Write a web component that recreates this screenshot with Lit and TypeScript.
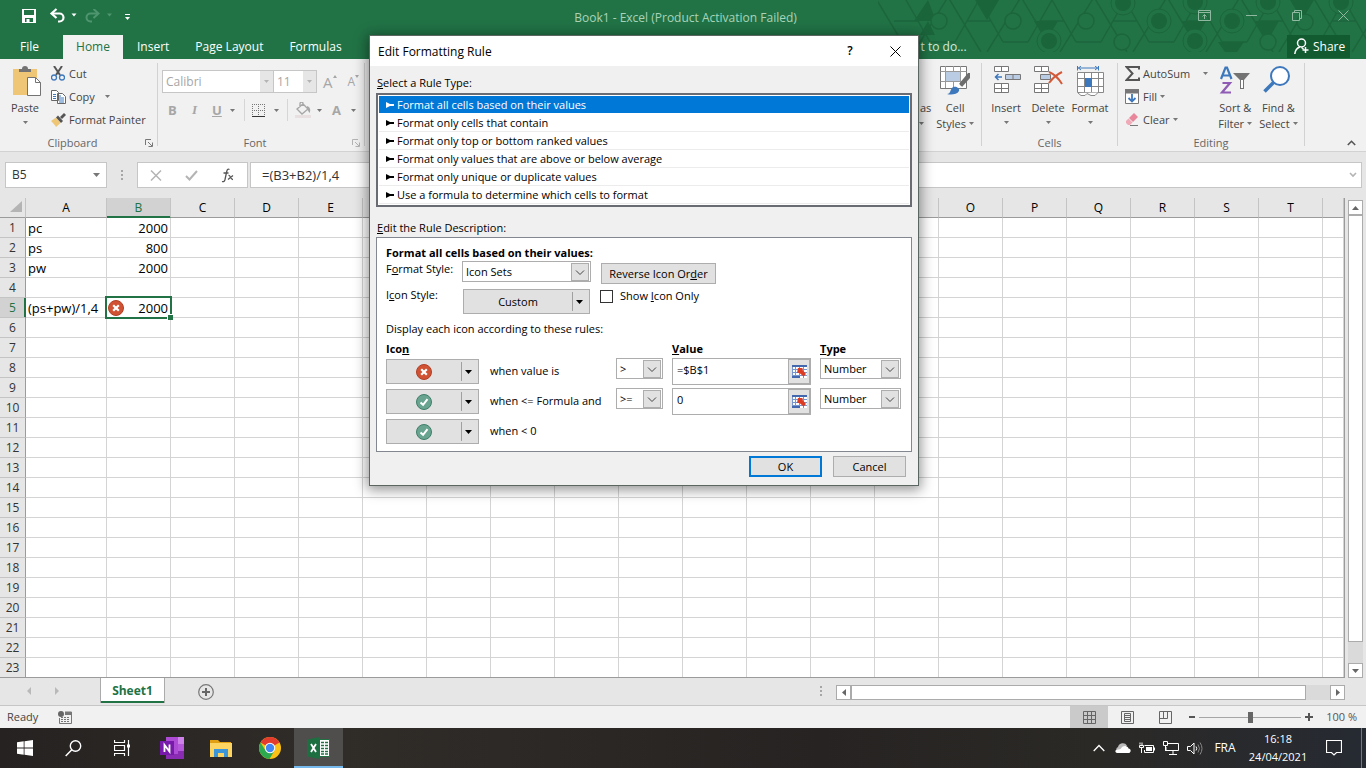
import { LitElement, html, svg, css } from "lit";
import { customElement, state } from "lit/decorators.js";
import { classMap } from "lit/directives/class-map.js";

const COLUMNS = ["A","B","C","D","E","F","G","H","I","J","K","L","M","N","O","P","Q","R","S","T"];
const ROWS = Array.from({ length: 23 }, (_, i) => i + 1);
const CELLS: Record<string, string> = {
  A1: "pc", B1: "2000", A2: "ps", B2: "800", A3: "pw", B3: "2000", A5: "(ps+pw)/1,4", B5: "2000",
};
const RULES = [
  "Format all cells based on their values",
  "Format only cells that contain",
  "Format only top or bottom ranked values",
  "Format only values that are above or below average",
  "Format only unique or duplicate values",
  "Use a formula to determine which cells to format",
];

const down = html`<svg class="down" width="5" height="3" viewBox="0 0 5 3"><path d="M0 0h5L2.5 3z" fill="currentColor"/></svg>`;
const caret = html`<svg class="caret" width="7" height="4" viewBox="0 0 7 4"><path d="M0 0h7L3.5 4z"/></svg>`;
const chevron = html`<svg class="chev" width="18" height="18" viewBox="0 0 18 18"><rect x=".5" y=".5" width="17" height="17" fill="#e1e1e1" stroke="#adadad"/><path d="M5 7.5l4 4 4-4" fill="none" stroke="#444"/></svg>`;
const crossBadge = html`<svg width="16" height="16" viewBox="0 0 16 16"><circle cx="8" cy="8" r="7.5" fill="#d05233" stroke="#b03f25"/><path d="M5.2 5.2l5.6 5.6M10.8 5.2l-5.6 5.6" stroke="#fff" stroke-width="2.2"/></svg>`;
const checkBadge = html`<svg width="16" height="16" viewBox="0 0 16 16"><circle cx="8" cy="8" r="7.5" fill="#68a490" stroke="#3f7f69"/><path d="M4.5 8.4l2.6 2.4 4.4-5.6" fill="none" stroke="#fff" stroke-width="2"/></svg>`;
const launcher = html`<svg class="launch" width="8" height="8" viewBox="0 0 8 8"><path d="M.5 6V.5H6M3 3l4 4M7.5 3.5v4h-4" fill="none" stroke="currentColor"/></svg>`;
const refIcon = html`<svg width="17" height="15" viewBox="0 0 17 15"><rect x="1" y="1" width="15" height="13" fill="#fff"/><path d="M1 1h15v2H1z" fill="#4468b0"/><path d="M1 5.5h15M1 8.5h15M1 11.5h15M4.5 3v11M8.5 3v11M12.5 3v11M1.5 3v11" stroke="#7796cf" fill="none"/><path d="M1 13h8" stroke="#4468b0" stroke-width="2"/><path d="M7 4h4.500v2l3.500 4-2.500 2.500-4-3.500H6z" fill="#dd3b22"/></svg>`;

/* Tiled hexagon ornament at the right of the title bar */
function ornament() {
  const lines = [];
  for (let x = 28; x < 520; x += 73) {
    lines.push(svg`<path d="M${x - 31} -3L${x + 2} 52M${x + 42} -3L${x + 8} 52M${x} 0L${x + 24} 42M${x + 49} 42L${x + 73} 0M${x + 24} 42h25M${x + 12} 21h-24"/>`);
  }
  const hollow = [[61, 21], [135, 21], [208, 21], [244, 42], [390, 42], [427, 22]];
  const solid = [[171, 41], [245, 3], [281, 21], [317, 41], [317, 2], [354, 21], [390, 2], [463, 2]];
  return html`<svg class="ornament" width="488" height="52" viewBox="0 0 488 52">
    <g fill="none" stroke="#1c663c" stroke-width="1.5">${lines}</g>
    <g fill="#1b653b">
      <path d="M36 21L50 0l8 21zM42 35l8-14 7 14zM97 0h24l-12 20zM156 21h24l-12 20zM267 0h24l-12-14zM304 21h24l-12 21zM412 0h24l-12 20zM377 21h24l-12 21zM340 42h26l-7 10h-12z"/>
    </g>
    <g fill="#217346" stroke="#1c663c" stroke-width="1.5">${hollow.map(([x, y]) => svg`<circle cx=${x} cy=${y} r="8"/>`)}</g>
    <g fill="#1b653b">${solid.map(([x, y]) => svg`<circle cx=${x} cy=${y} r="12" fill="#217346" stroke="#1c663c"/><circle cx=${x} cy=${y} r="8"/>`)}</g>
  </svg>`;
}

@customElement("format-dialog")
class FormatDialog extends LitElement {
  @state() selected = 0;

  static styles = css`
    :host { display: block; box-sizing: border-box; width: 550px; border: 1px solid #5c6660; background: #f0f0f0;
      font: 11px/16px "Open Sans", "Noto Sans", sans-serif; color: #000; box-shadow: 0 2px 12px 2px rgba(0,0,0,.42); }
    * { box-sizing: border-box; }
    button, select, input { font: inherit; color: inherit; margin: 0; border-radius: 0; }
    header { display: flex; gap: 25px; height: 30px; background: #fff; align-items: center; padding: 0 13px 0 8px; font-size: 12px; }
    h1 { font: inherit; margin: 0; flex: 1; padding-top: 1px; }
    header button { border: 0; background: none; padding: 0; width: 20px; height: 20px; display: grid; place-items: center; font-weight: 600; }
    .body { padding: 9px 6px 8px; }
    .label { display: block; padding-left: 1px; }
    .rules { margin: 2px 0 13px; padding: 1px; border: 2px solid #696c72; background: #fff; list-style: none; }
    .rules li { height: 18px; line-height: 18px; border-bottom: 1px solid #ececec; display: flex; align-items: center; gap: 3px; padding-left: 7px; cursor: default; }
    .rules li.on { background: #0078d7; color: #fff; border-color: #fff; }
    .desc { margin-top: 1px; border: 1px solid #828790; background: #fff; height: 215px; padding: 7px 9px 0; }
    h2 { font: inherit; font-weight: 700; margin: 0; line-height: 16px; }
    .form { display: grid; grid-template-columns: 76px 129px 1fr; align-items: start; }
    .form > :nth-child(3n) { margin-left: 10px; }
    .btn { border: 1px solid #adadad; background: #e1e1e1; height: 21px; padding: 0 8px; line-height: 19px; }
    .reverse { justify-self: start; width: 115px; margin-top: 2px; padding: 0; }
    .combo { display: grid; border: 1px solid #adadad; background: #fff; height: 21px; padding: 1px; }
    .combo select { grid-area: 1 / 1; appearance: none; border: 0; background: none; padding: 0 0 0 2px; width: 100%; line-height: 16px; outline: 0; }
    .chev { grid-area: 1 / 1; justify-self: end; align-self: center; pointer-events: none; }
    .split { display: flex; align-items: center; justify-content: center; height: 25px; border: 1px solid #adadad; background: #e1e1e1; padding: 0; }
    .split .main { flex: 1; display: grid; place-items: center; }
    .split .drop { width: 17px; height: 19px; border-left: 1px solid #a0a0a0; display: grid; place-items: center; padding-right: 4px; }
    .icons { margin: 5px 1px 0; }
    .second { margin-top: 3px; }
    .check { display: flex; align-items: center; gap: 7px; margin-top: 4px; }
    .check input { appearance: none; width: 13px; height: 13px; border: 1px solid #333; background: #fff; margin-left: -1px; }
    .note { margin: 7px 0 0; }
    .grid { display: grid; grid-template-columns: 93px 11px 126px 47px 9px 139px 9px 81px; grid-template-rows: 17px; grid-auto-rows: 30px; align-items: start; margin-top: 4px; }
    .c1 { grid-column: 1; } .c3 { grid-column: 3; } .c4 { grid-column: 4; } .c6 { grid-column: 6; } .c8 { grid-column: 8; }
    .grid .split { margin-top: 1px; }
    .grid .c3 { margin-top: 5px; }
    .grid b { line-height: 16px; }
    .ref { display: flex; height: 27px; border: 1px solid #adadad; background: #fff; }
    .ref input { flex: 1; min-width: 0; border: 0; background: none; padding: 0 4px 4px; outline: 0; }
    .ref button { width: 22px; border: 1px solid #adadad; background: #e1e1e1; padding: 0; display: grid; place-items: center; }
    footer { display: flex; justify-content: flex-end; gap: 11px; padding: 4px 6px 0 0; }
    footer .btn { width: 73px; }
    footer .ok { border: 2px solid #0078d7; line-height: 17px; }
  `;

  private combo(cls: string, name: string, value: string) {
    return html`<div class="combo ${cls}"><select aria-label=${name}><option>${value}</option></select>${chevron}</div>`;
  }

  private iconButton(badge: unknown, name: string) {
    return html`<button class="split c1" aria-label=${name}><span class="main">${badge}</span><span class="drop">${caret}</span></button>`;
  }

  render() {
    return html`
      <header>
        <h1>Edit Formatting Rule</h1>
        <button aria-label="Help">?</button>
        <button aria-label="Close"><svg width="11" height="11" viewBox="0 0 11 11"><path d="M.5.5l10 10M10.5.5l-10 10" stroke="#000"/></svg></button>
      </header>
      <div class="body">
        <span class="label"><u>S</u>elect a Rule Type:</span>
        <ul class="rules" role="listbox" aria-label="Select a Rule Type">
          ${RULES.map((rule, i) => html`<li role="option" aria-selected=${i === this.selected} class=${classMap({ on: i === this.selected })} @click=${() => (this.selected = i)}>
            <svg width="8" height="6" viewBox="0 0 8 6"><path d="M0 0l4 2h4v2H4L0 6z" fill="currentColor"/></svg>${rule}</li>`)}
        </ul>
        <span class="label"><u>E</u>dit the Rule Description:</span>
        <section class="desc">
          <h2>Format all cells based on their values:</h2>
          <div class="form">
            <label for="style">F<u>o</u>rmat Style:</label>
            <div class="combo"><select id="style"><option>Icon Sets</option></select>${chevron}</div>
            <button class="btn reverse">Reverse Icon Or<u>d</u>er</button>
            <label class="second" for="icons">I<u>c</u>on Style:</label>
            <button class="split icons" id="icons"><span class="main">Custom</span><span class="drop">${caret}</span></button>
            <label class="check"><input type="checkbox"><span>Show <u>I</u>con Only</span></label>
          </div>
          <p class="note">Display each icon according to these rules:</p>
          <div class="grid">
            <b class="c1">Ico<u>n</u></b><b class="c6"><u>V</u>alue</b><b class="c8"><u>T</u>ype</b>
            ${this.iconButton(crossBadge, "First icon")}
            <span class="c3">when value is</span>
            ${this.combo("c4", "First operator", ">")}
            <div class="ref c6"><input aria-label="First value" value="=$B$1"><button aria-label="Pick cell">${refIcon}</button></div>
            ${this.combo("c8", "First type", "Number")}
            ${this.iconButton(checkBadge, "Second icon")}
            <span class="c3">when &lt;= Formula and</span>
            ${this.combo("c4", "Second operator", ">=")}
            <div class="ref c6"><input aria-label="Second value" value="0"><button aria-label="Pick cell">${refIcon}</button></div>
            ${this.combo("c8", "Second type", "Number")}
            ${this.iconButton(checkBadge, "Third icon")}
            <span class="c3">when &lt; 0</span>
          </div>
        </section>
        <footer><button class="btn ok">OK</button><button class="btn">Cancel</button></footer>
      </div>`;
  }
}

@customElement("app-root")
class AppRoot extends LitElement {
  static styles = css`
    :host { display: flex; flex-direction: column; height: 100vh; position: relative; overflow: hidden; background: #e6e6e6;
      font: 11px/16px "Open Sans", "Noto Sans", sans-serif; color: #444; }
    * { box-sizing: border-box; }
    svg { display: block; flex: none; }
    button, input, select { font: inherit; color: inherit; margin: 0; border-radius: 0; }
    button { border: 0; background: none; padding: 0; white-space: nowrap; }
    format-dialog { position: absolute; left: 369px; top: 35px; z-index: 5; }

    .top { background: #217346; position: relative; color: #fff; flex: none; }
    .ornament { position: absolute; right: 0; top: 0; }
    .title { height: 35px; display: flex; align-items: center; position: relative; padding: 0 17px 4px 22px; }
    .quick { display: flex; align-items: center; flex: 1; }
    .quick button, .win button { display: grid; place-items: center; }
    .quick .redo { color: #4f9570; }
    .title h1 { font: inherit; font-size: 12px; margin: 0; padding-top: 5px; color: #a9d3b9; }
    .win { flex: 1; display: flex; justify-content: flex-end; gap: 35px; color: #8fb9a0; }
    .tabs { display: flex; height: 24px; position: relative; font-size: 12px; line-height: 24px; padding-right: 16px; }
    .tabs a { color: #fff; text-decoration: none; padding: 0 13px; }
    .tabs .file { width: 63px; padding: 0 0 0 20px; }
    .tabs .on { background: #f1f1f1; color: #217346; width: 60px; padding: 0; text-align: center; margin-right: 1px; }
    .tell { flex: 1; color: #d6ebde; white-space: nowrap; }
    .tell span { display: block; width: 612px; text-align: right; }
    .share { background: #125b31; width: 63px; height: 23px; display: flex; align-items: center; gap: 4px; padding-left: 7px; }

    .ribbon { flex: none; display: flex; height: 93px; background: #f1f1f1; border-bottom: 1px solid #d2d2d2; padding-top: 4px; }
    .group { display: grid; grid-template-rows: 1fr 16px; padding-right: 1px; background: linear-gradient(#d2d2d2, #d2d2d2) right top / 1px calc(100% - 5px) no-repeat; }
    .body { display: flex; min-height: 0; }
    .name { text-align: center; color: #666; display: flex; justify-content: center; }
    .name .launch { margin: 4px 4px 0 0; color: #777; }
    .font .launch { color: #b4b4b4; }
    .name span { flex: 1; }
    .down { color: #777; }
    .clip { width: 158px; } .font { width: 207px; } .rest { flex: 1; min-width: 0; } .cells { width: 136px; } .edit { width: 187px; }
    .big { display: flex; flex-direction: column; align-items: center; line-height: 16px; padding-top: 3px; }
    .big .down { margin-top: 5px; }
    .big svg:first-child { margin-bottom: 4px; }
    .line { display: flex; align-items: center; justify-content: center; gap: 3px; }
    .big .line .down { margin-top: 2px; }
    .stack { display: grid; grid-auto-rows: 23px; align-content: start; margin-top: -1px; }
    .stack button { display: flex; align-items: center; gap: 3px; }
    .stack .pic { width: 16px; display: grid; place-items: center; }
    .stack .down { margin-left: 7px; }
    .stack .near { margin-left: 0; }
    .fontbody { padding: 7px 0 0 4px; flex-direction: column; gap: 6px; color: #a6a6a6; }
    .frow { display: flex; align-items: center; height: 23px; }
    .pick { display: grid; border: 1px solid #c6c6c6; background: #fff; height: 23px; margin-right: -1px; }
    .pick select { grid-area: 1/1; appearance: none; border: 0; background: none; padding: 0 3px; width: 100%; font-size: 12px; }
    .pick i { grid-area: 1/1; justify-self: end; width: 13px; background: #e6e6e6; display: grid; place-items: center; pointer-events: none; }
    .pick .down { color: #b4b4b4; }
    .wide { width: 112px; } .narrow { width: 44px; }
    .grow { display: flex; font-size: 15px; padding-left: 7px; }
    .grow svg { margin-top: 1px; }
    .grow.small { font-size: 12px; padding-left: 11px; }
    .tools { display: grid; grid-template-columns: 22px 22px 18px 14px 8px 22px 13px 8px 22px 15px 19px 6px; align-items: center; font-size: 13px; font-weight: 700; padding-left: 6px; }
    .tools i { font-weight: 600; padding-left: 2px; font-family: "Liberation Serif", serif; }
    .rule { width: 1px; height: 22px; background: #d6d6d6; }
    .styles { padding-right: 7px; justify-content: flex-end; gap: 5px; }
    .edit .body { gap: 6px; }
    .edit .stack { margin-left: 6px; margin-right: 3px; }
    .edit .wider .down { margin-left: 10px; }
    .end { width: 61px; display: flex; align-items: flex-end; justify-content: flex-end; padding: 0 10px 5px; }

    .formula { flex: none; display: flex; height: 46px; padding: 10px 4px 10px 5px; color: #333; font-size: 12px; }
    .box { border: 1px solid #c6c6c6; background: #fff; display: flex; align-items: center; }
    .box input { border: 0; background: none; outline: 0; min-width: 0; padding: 0; }
    .namebox { width: 102px; padding: 0 6px; }
    .namebox input { width: 82px; }
    .dots { width: 30px; display: grid; place-items: center; }
    .fx { width: 111px; justify-content: space-between; padding: 0 12px 0 12px; margin-right: 2px; }
    .entry { flex: 1; padding: 0 4px 0 11px; }
    .entry input { flex: 1; font-size: 13px; }

    .sheet { flex: 1; min-height: 0; display: flex; }
    .view { flex: 1; min-width: 0; overflow: hidden; border-bottom: 1px solid #9b9b9b; border-right: 1px solid #9b9b9b; }
    table { table-layout: fixed; width: 100%; border-collapse: separate; border-spacing: 0; background: #fff; color: #000; font-size: 13px; line-height: 17px; }
    th { font-weight: 400; background: #e6e6e6; padding: 0; height: 20px; border-right: 1px solid #c4c4c4; border-bottom: 1px solid #9b9b9b; font-size: 12px; line-height: 19px; }
    td { padding: 2px 2px 0; height: 20px; border-right: 1px solid #d4d4d4; border-bottom: 1px solid #d4d4d4; white-space: nowrap; overflow: hidden; }
    tbody th { border-right-color: #9b9b9b; border-bottom-color: #c4c4c4; color: #333; }
    th.on { background: #d2d2d2; color: #217346; }
    thead th.on { box-shadow: inset 0 -1px #217346; border-bottom-color: #217346; }
    tbody th.on { border-right-color: #217346; box-shadow: inset -1px 0 #217346; }
    .num { text-align: right; }
    .active { position: relative; overflow: visible; }
    .active svg { position: absolute; left: 1px; top: 2px; }
    .active::before { content: ""; position: absolute; inset: -2px; border: 2px solid #217346; }
    .active::after { content: ""; position: absolute; right: -3px; bottom: -3px; width: 5px; height: 5px; background: #217346; border: solid #fff; border-width: 1px 0 0 1px; }
    .corner svg { margin: 0 3px 2px auto; }
    .rh { width: 26px; } .ca { width: 81px; } .cn { width: 64px; }
    .vbar { width: 15px; margin: 2px 3px 0 3px; display: flex; flex-direction: column; background: #dadada; }
    .vbar button, .hbar button { width: 15px; height: 15px; background: #fff; border: 1px solid #ababab; display: grid; place-items: center; color: #666; flex: none; }
    .thumb { background: #fff; border: 1px solid #ababab; }
    .vbar .thumb { flex: 428; } .vbar .gap { flex: 21; }

    .sheets { flex: none; display: flex; height: 28px; border-bottom: 1px solid #c6c6c6; padding-right: 21px; }
    .nav { width: 100px; display: flex; gap: 24px; padding: 9px 0 0 27px; }
    .tab { width: 65px; height: 25px; background: #fff; border: 0 solid #ababab; border-width: 0 1px; box-shadow: inset 0 -2px #217346; color: #217346; font-size: 12px; font-weight: 700; }
    .add { margin-left: 33px; height: 28px; }
    .split { flex: 1; display: flex; justify-content: flex-end; padding: 8px 14px 0; }
    .hbar { width: 509px; max-width: 60%; display: flex; margin-top: 7px; height: 15px; background: #dadada; }
    .hbar .thumb { flex: 456; } .hbar .gap { flex: 24; }

    .status { flex: none; display: flex; height: 22px; background: #f1f1f1; align-items: center; padding: 0 9px 0 7px; }
    .status .info { flex: 1; display: flex; gap: 20px; align-items: center; }
    .status .mode { width: 38px; height: 22px; display: grid; place-items: center; color: #666; }
    .status .mode.on { background: #cacaca; }
    .zoom { display: flex; align-items: center; gap: 4px; padding-left: 5px; color: #555; }
    .zoom input { appearance: none; width: 102px; height: 12px; background: linear-gradient(#a6a6a6, #a6a6a6) center / 100% 1px no-repeat; }
    .zoom input::-webkit-slider-thumb { appearance: none; width: 5px; height: 11px; background: #666; }
    .pct { width: 40px; text-align: right; }

    .taskbar { flex: none; height: 40px; display: flex; color: #fff; background: linear-gradient(90deg, #262221, #302c28 25%, #262322 60%, #2b2926 80%, #262a32); }
    .taskbar button { width: 49px; height: 40px; display: grid; place-items: center; }
    .taskbar .on { background: #504e4c; box-shadow: inset 0 -2px #76b9ed; }
    .tray { flex: 1; display: flex; justify-content: flex-end; align-items: center; }
    .tray button { width: 24px; }
    .tray .lang { width: 36px; font-size: 12px; }
    .clock { width: 70px; text-align: center; line-height: 18px; }
    .tray .bell { width: 42px; }
    .desk { width: 5px; height: 40px; border-left: 1px solid #77777b; margin-left: 6px; }
  `;

  private cell(col: string, row: number) {
    const key = col + row;
    const active = key === "B5";
    return html`<td class=${classMap({ num: col === "B", active })}>${active ? crossBadge : ""}${CELLS[key] ?? ""}</td>`;
  }

  private renderTop() {
    return html`<header class="top">${ornament()}
      <div class="title">
        <div class="quick">
          <button aria-label="Save"><svg width="14" height="14" viewBox="0 0 14 14"><path fill-rule="evenodd" d="M0 0h14v14H0zM2 1v5h10V1zM3 9v4h1.5v-3h3v3H11V9z" fill="#fff"/></svg></button>
          <button aria-label="Undo"><svg width="30" height="14" viewBox="0 0 30 14" overflow="visible"><g transform="translate(14 0)"><path d="M3 4.5h6.5a4 4 0 0 1 0 8H8" fill="none" stroke="#fff" stroke-width="2.2"/><path d="M6.5 0L1.5 4.5l5 4.5" fill="none" stroke="#fff" stroke-width="2.2"/><path d="M21.5 4.5h5l-2.500 3z" fill="#fff"/></g></svg></button>
          <button class="redo" aria-label="Redo"><svg width="48" height="14" viewBox="0 0 48 14"><g transform="translate(18 0)"><path d="M13 4.5H6.5a4 4 0 0 0 0 8H8" fill="none" stroke="currentColor" stroke-width="2"/><path d="M9.5 0l5 4.5-5 4.5" fill="none" stroke="currentColor" stroke-width="2"/><path d="M23 4.5h5l-2.500 3z" fill="currentColor"/></g></svg></button>
          <button aria-label="Customize"><svg width="16" height="10" viewBox="0 0 16 10"><path d="M11 3.5h5" stroke="#fff"/><path d="M11 6h5l-2.500 3z" fill="#fff"/></svg></button>
        </div>
        <h1>Book1 - Excel (Product Activation Failed)</h1>
        <div class="win">
          <button aria-label="Ribbon options"><svg width="13" height="11" viewBox="0 0 13 11"><path d="M.5.5h12v10H.5zM.5 2.5h12M6.5 9V4.5M4.5 6.5l2-2 2 2" fill="none" stroke="currentColor"/></svg></button>
          <button aria-label="Minimize"><svg width="11" height="11" viewBox="0 0 11 11"><path d="M0 5.5h11" stroke="currentColor"/></svg></button>
          <button aria-label="Restore"><svg width="11" height="11" viewBox="0 0 11 11"><path d="M.5 2.5h7v8h-7zM2.5 2.5v-2h7v8h-2" fill="none" stroke="currentColor"/></svg></button>
          <button aria-label="Close"><svg width="11" height="11" viewBox="0 0 11 11"><path d="M.5.5l10 10M10.5.5l-10 10" stroke="currentColor"/></svg></button>
        </div>
      </div>
      <nav class="tabs">
        <a class="file" href="#">File</a><a class="on" href="#">Home</a><a href="#">Insert</a><a href="#">Page Layout</a><a href="#">Formulas</a>
        <div class="tell"><span>t to do...</span></div>
        <button class="share"><svg width="15" height="17" viewBox="0 0 15 17"><circle cx="7.5" cy="5" r="4" fill="none" stroke="#fff" stroke-width="1.5"/><path d="M.8 16c.4-3.5 2.2-6 5-7M7.5 9.5l2 1.5M11.5 9v6M8.5 12h6" fill="none" stroke="#fff" stroke-width="1.5"/></svg>Share</button>
      </nav>
    </header>`;
  }

  private renderRibbon() {
    return html`<section class="ribbon">
      <div class="group clip"><div class="body">
        <button class="big">
          <svg width="50" height="30" viewBox="0 0 50 30"><path d="M13 3h24v26H13z" fill="#eec675"/><path d="M19 6V3h3a3 3 0 0 1 6 0h3v3z" fill="#737373"/><path d="M27.5 11.5h8l5 5v13h-13z" fill="#fff" stroke="#737373"/><path d="M35.5 11.5v5h5" fill="none" stroke="#737373"/></svg>
          <span>Paste</span>${down}
        </button>
        <div class="stack">
          <button><span class="pic"><svg width="14" height="15" viewBox="0 0 14 15"><path d="M3 0l6 9M11 0L5 9" stroke="#555" stroke-width="2"/><circle cx="3" cy="11.5" r="2.5" fill="none" stroke="#3d78bd" stroke-width="1.3"/><circle cx="11" cy="11.5" r="2.5" fill="none" stroke="#3d78bd" stroke-width="1.3"/></svg></span>Cut</button>
          <button><span class="pic"><svg width="15" height="14" viewBox="0 0 15 14"><path d="M.5.5h5l2 2v8h-7zM6.5 3.5h5l3 3v7h-8z" fill="#fff" stroke="#666"/><path d="M2 4.5h3M2 6.5h3M2 8.5h3M8 8h5M8 10h5M8 12h5M8 6h2" stroke="#3d78bd"/></svg></span>Copy ${down}</button>
          <button><span class="pic"><svg width="16" height="14" viewBox="0 0 16 14"><path d="M1 8l5-3.5L10.5 10 6 14c-1-2-3-4-5-6z" fill="#eec675"/><path d="M6 4.5l2-2 5 5.5-2 2zM10 4l4-4 2 2-4 4z" fill="#555"/></svg></span>Format Painter</button>
        </div></div>
        <div class="name"><span>Clipboard</span>${launcher}</div>
      </div>
      <div class="group font"><div class="body fontbody">
        <div class="frow">
          <div class="pick wide"><select aria-label="Font"><option>Calibri</option></select><i>${down}</i></div>
          <div class="pick narrow"><select aria-label="Font size"><option>11</option></select><i>${down}</i></div>
          <button class="grow" aria-label="Increase font size">A<svg width="4" height="3" viewBox="0 0 4 3"><path d="M0 3h4L2 0z" fill="#a6a6a6"/></svg></button>
          <button class="grow small" aria-label="Decrease font size">A<svg width="4" height="3" viewBox="0 0 4 3"><path d="M0 0h4L2 3z" fill="#a6a6a6"/></svg></button>
        </div>
        <div class="tools">
          <span>B</span><i>I</i><u>U</u><span>${down}</span><span class="rule"></span>
          <svg width="13" height="13" viewBox="0 0 13 13"><path d="M.5 0v12M6.5 0v12M12.5 0v12M0 .5h13M0 6.5h13" stroke="#777" stroke-dasharray="1 1"/><path d="M0 12.5h13" stroke="#333"/></svg>
          ${down}<span class="rule"></span>
          <svg width="16" height="16" viewBox="0 0 16 16"><path d="M2 7l6-5 5 5-6 5zM5 5V1.5a1.5 1.5 0 0 1 3 0V4" fill="none" stroke="#a6a6a6" stroke-width="1.3"/><path d="M12 4c3 1 4 4 2.5 7L12 7z" fill="#a6a6a6"/><path d="M0 13h16v3H0z" fill="#e8e0e0"/></svg>
          ${down}<span>A</span>${down}
        </div></div>
        <div class="name"><span>Font</span>${launcher}</div>
      </div>
      <div class="group rest"><div class="body styles">
        <button class="big"><svg width="30" height="30" viewBox="0 0 30 30"><path d="M.5.5h26v22H.5zM.5 6.5h26M.5 12.5h26M9.5 0v22" fill="#fff" stroke="#777"/><path d="M18 20L28 8v6l-7 9z" fill="#777"/></svg><span>Format as</span><span class="line">Table ${down}</span></button>
        <button class="big"><svg width="30" height="30" viewBox="0 0 30 30"><path d="M.5.5h26v22H.5z" fill="#fff" stroke="#777"/><path d="M.5 5.5h26M.5 15.5h26M5.5 0v22M20.5 0v22M13.5 0v5M13.5 16v6" stroke="#999" fill="none"/><path d="M6 6h14v9H6z" fill="#b9cce4"/><path d="M19 18l9-11h2v5l-8 9z" fill="#6d6d6d"/><path d="M7 28c4 0 3-5 6-7 3-1 7 1 6 4-2 4-9 4-12 3z" fill="#3d78bd"/><path d="M18 18.5l3 3" stroke="#fff" stroke-width="2"/></svg><span>Cell</span><span class="line">Styles ${down}</span></button>
      </div><div class="name"></div></div>
      <div class="group cells"><div class="body">
        <button class="big"><svg width="48" height="30" viewBox="0 0 48 30"><path d="M12.5.5h14v5h-14zM19.5.5v5M12.5 17.5h14v9h-14zM12.5 22.5h14M19.5 17.5v9" fill="#fff" stroke="#777"/><path d="M23.5 8.5h15v5h-15zM31 8.5v5" fill="#b9cce4" stroke="#777"/><path d="M20 11h-6M16.5 8L13.5 11l3 3" fill="none" stroke="#3d78bd" stroke-width="1.5"/></svg><span>Insert</span>${down}</button>
        <button class="big"><svg width="36" height="30" viewBox="0 0 36 30"><path d="M4.5.5h14v5h-14zM11.5.5v5M4.5 17.5h14v9h-14zM4.5 22.5h14M11.5 17.5v9" fill="#fff" stroke="#777"/><path d="M10.5 8.5h10v5h-10z" fill="#b9cce4" stroke="#777"/><path d="M19 6c5 2 10 7 13 12M32 6c-6 3-10 7-13 11" fill="none" stroke="#d25a38" stroke-width="2"/></svg><span>Delete</span>${down}</button>
        <button class="big"><svg width="48" height="30" viewBox="0 0 48 30"><path d="M11.5 6.5h26v20h-26zM11.5 12.5h26M11.5 20.5h26M18.5 6v20M25.5 6v20M32.5 6v20" fill="#fff" stroke="#888"/><path d="M19 12h7v9h-7z" fill="#3d78bd"/><path d="M12 2h20M11.5 0v4.500M32.500 0v4.500M15 0l-2.500 2L15 4M29 0l2.500 2L29 4" fill="none" stroke="#3d78bd"/><path d="M12 27l3 2.500h4l2-2 4 2h4l3-3" fill="#fff" stroke="#888"/></svg><span>Format</span>${down}</button>
      </div><div class="name">Cells</div></div>
      <div class="group edit"><div class="body">
        <div class="stack">
          <button class="wider"><span class="pic"><svg width="15" height="15" viewBox="0 0 15 15"><path d="M14 3.5V1H1.5l6 6.5-6 6.5H14v-2.5" fill="none" stroke="#555" stroke-width="2"/></svg></span>AutoSum ${down}</button>
          <button><span class="pic"><svg width="14" height="15" viewBox="0 0 14 15"><path d="M.5 4h13v10.5H.5z" fill="#fff" stroke="#777"/><path d="M0 0h14v4H0z" fill="#777"/><path d="M7 5v7M3.5 9L7 12.5 10.5 9" fill="none" stroke="#3d78bd" stroke-width="1.8"/></svg></span>Fill <svg class="down near" width="5" height="3" viewBox="0 0 5 3"><path d="M0 0h5L2.5 3z" fill="currentColor"/></svg></button>
          <button><span class="pic"><svg width="14" height="13" viewBox="0 0 14 13"><path d="M4 5l5-5 4 4-5 5z" fill="#e8879b"/><path d="M3.5 5.5l4 4-2.5 2.500H3L1 10V8z" fill="#f0a9b7"/><path d="M5 12.5h8" stroke="#777"/></svg></span>Clear <svg class="down near" width="5" height="3" viewBox="0 0 5 3"><path d="M0 0h5L2.5 3z" fill="currentColor"/></svg></button>
        </div>
        <button class="big"><svg width="36" height="30" viewBox="0 0 36 30"><path d="M4 13L8.500 1.500h1.500L14.500 13M5.500 9.500h7.500" fill="none" stroke="#3d78bd" stroke-width="2.2"/><path d="M5.500 17H13L5 26.500h9" fill="none" stroke="#8e5bb5" stroke-width="2.2"/><path d="M16 7h17l-6 7v9h-4v-9z" fill="#737373"/><path d="M24 14h2v8h-2z" fill="#fff"/></svg><span>Sort &amp;</span><span class="line">Filter ${down}</span></button>
        <button class="big"><svg width="38" height="30" viewBox="0 0 38 30"><circle cx="21" cy="10" r="9" fill="#fff" stroke="#3d78bd" stroke-width="2"/><path d="M14.500 16.500L5.500 25.500" stroke="#3d78bd" stroke-width="3.5"/></svg><span>Find &amp;</span><span class="line">Select ${down}</span></button>
      </div><div class="name">Editing</div></div>
      <div class="end"><button aria-label="Collapse ribbon"><svg width="9" height="6" viewBox="0 0 9 6"><path d="M.8 5L4.5 1.3 8.2 5" fill="none" stroke="#555" stroke-width="1.6"/></svg></button></div>
    </section>`;
  }

  private renderSheet() {
    return html`
      <section class="formula">
        <div class="box namebox"><input aria-label="Name box" value="B5"><svg width="7" height="4" viewBox="0 0 7 4"><path d="M0 0h7L3.5 4z" fill="#777"/></svg></div>
        <div class="dots"><svg width="2" height="10" viewBox="0 0 2 10"><path d="M0 0h2v2H0zM0 4h2v2H0zM0 8h2v2H0z" fill="#a6a6a6"/></svg></div>
        <div class="box fx">
          <svg width="12" height="11" viewBox="0 0 12 11"><path d="M1 .5l10 10M11 .5L1 10.5" stroke="#b4b4b4" stroke-width="1.5"/></svg>
          <svg width="13" height="11" viewBox="0 0 13 11"><path d="M1 6l3.5 3.5L12 1" fill="none" stroke="#b4b4b4" stroke-width="2"/></svg>
          <svg width="14" height="15" viewBox="0 0 14 15"><path d="M8.5 1.5c-2-1-2.5.5-3 3L4 11.5c-.5 2-1.5 2.5-3 2M2.5 5h5M7.5 7.5c2-.5 2 4 4.5 4M12 7.5l-5 4" fill="none" stroke="#555" stroke-width="1.3"/></svg>
        </div>
        <div class="box entry"><input aria-label="Formula" value="=(B3+B2)/1,4"><svg width="8" height="6" viewBox="0 0 8 6"><path d="M1 1l3 3 3-3" fill="none" stroke="#b4b4b4" stroke-width="1.6"/></svg></div>
      </section>
      <main class="sheet">
        <div class="view"><table>
          <colgroup><col class="rh"><col class="ca">${COLUMNS.slice(1).map(() => html`<col class="cn">`)}<col></colgroup>
          <thead><tr><th class="corner"><svg width="12" height="11" viewBox="0 0 12 11"><path d="M12 0v11H0z" fill="#b4b4b4"/></svg></th>
            ${COLUMNS.map((c) => html`<th class=${classMap({ on: c === "B" })}>${c}</th>`)}<th></th></tr></thead>
          <tbody>${ROWS.map((r) => html`<tr><th class=${classMap({ on: r === 5 })}>${r}</th>${COLUMNS.map((c) => this.cell(c, r))}<td></td></tr>`)}</tbody>
        </table></div>
        <div class="vbar">
          <button aria-label="Scroll up"><svg width="7" height="4" viewBox="0 0 7 4"><path d="M0 4h7L3.5 0z" fill="currentColor"/></svg></button>
          <div class="thumb"></div><div class="gap"></div>
          <button aria-label="Scroll down"><svg width="7" height="4" viewBox="0 0 7 4"><path d="M0 0h7L3.5 4z" fill="currentColor"/></svg></button>
        </div>
      </main>
      <section class="sheets">
        <div class="nav"><svg width="4" height="8" viewBox="0 0 4 8"><path d="M4 0v8L0 4z" fill="#b9b9b9"/></svg><svg width="4" height="8" viewBox="0 0 4 8"><path d="M0 0v8l4-4z" fill="#b9b9b9"/></svg></div>
        <button class="tab">Sheet1</button>
        <button class="add" aria-label="New sheet"><svg width="16" height="16" viewBox="0 0 16 16"><circle cx="8" cy="8" r="7.3" fill="none" stroke="#777" stroke-width="1.2"/><path d="M8 4v8M4 8h8" stroke="#666" stroke-width="2"/></svg></button>
        <div class="split"><svg width="2" height="10" viewBox="0 0 2 10"><path d="M0 0h2v2H0zM0 4h2v2H0zM0 8h2v2H0z" fill="#a6a6a6"/></svg></div>
        <div class="hbar">
          <button aria-label="Scroll left"><svg width="4" height="7" viewBox="0 0 4 7"><path d="M4 0v7L0 3.5z" fill="currentColor"/></svg></button>
          <div class="thumb"></div><div class="gap"></div>
          <button aria-label="Scroll right"><svg width="4" height="7" viewBox="0 0 4 7"><path d="M0 0v7l4-3.5z" fill="currentColor"/></svg></button>
        </div>
      </section>
      <section class="status">
        <div class="info"><span>Ready</span><svg width="14" height="13" viewBox="0 0 14 13"><circle cx="3" cy="3" r="3" fill="#666"/><path d="M7 1h6.5v11.5h-12V7" fill="none" stroke="#777"/><path d="M7 1h7v3H7z" fill="#777"/><path d="M3 6.5h9M3 8.5h9M3 10.5h9" stroke="#777" stroke-dasharray="2 1"/></svg></div>
        <button class="mode on" aria-label="Normal view"><svg width="13" height="13" viewBox="0 0 13 13"><path d="M.5.5h12v12H.5zM.5 4.5h12M.5 8.5h12M4.5.5v12M8.5.5v12" fill="none" stroke="currentColor"/></svg></button>
        <button class="mode" aria-label="Page layout view"><svg width="13" height="13" viewBox="0 0 13 13"><path d="M.5.5h12v12H.5zM3.5 2.5h6v8h-6zM4 4.5h5M4 6.5h5M4 8.5h5" fill="none" stroke="currentColor"/></svg></button>
        <button class="mode" aria-label="Page break view"><svg width="13" height="13" viewBox="0 0 13 13"><path d="M.5.5h12v12H.5zM.5 7.5h8v-7M4.5.5v7" fill="none" stroke="currentColor"/></svg></button>
        <div class="zoom">
          <svg width="6" height="8" viewBox="0 0 6 8"><path d="M0 4h6" stroke="currentColor" stroke-width="2"/></svg>
          <input type="range" min="0" max="100" value="50" aria-label="Zoom">
          <svg width="8" height="8" viewBox="0 0 8 8"><path d="M0 4h8M4 0v8" stroke="currentColor" stroke-width="2"/></svg>
          <span class="pct">100 %</span>
        </div>
      </section>`;
  }

  private renderTaskbar() {
    return html`<footer class="taskbar">
      <button aria-label="Start"><svg width="16" height="16" viewBox="0 0 16 16"><path d="M0 2.3L6.7 1.3v6.3H0zM7.5 1.2L16 0v7.6H7.5zM0 8.4h6.7v6.3L0 13.7zM7.5 8.4H16V16l-8.5-1.2z" fill="#fff"/></svg></button>
      <button aria-label="Search"><svg width="17" height="17" viewBox="0 0 17 17"><circle cx="10.5" cy="6" r="5.2" fill="none" stroke="#fff" stroke-width="1.4"/><path d="M6.8 9.7L.7 16" stroke="#fff" stroke-width="1.5"/></svg></button>
      <button aria-label="Task view"><svg width="17" height="16" viewBox="0 0 17 16"><path d="M.5 0v2.5h10V0M.5 5.500h10v5H.5zM.5 16v-2.500h10V16M14.500 0v16" fill="none" stroke="#fff" stroke-width="1.2"/><path d="M13 4.500h3v3h-3z" fill="#fff"/></svg></button>
      <button aria-label="OneNote"><svg width="24" height="22" viewBox="0 0 24 22"><path d="M6 0h18v22H6z" fill="#ae4bd5"/><path d="M18 0h6v7h-6z" fill="#cf81ea"/><path d="M18 7h6v7h-6z" fill="#b558d9"/><path d="M18 14h6v8H6v-5h12z" fill="#8a2bb4"/><path d="M0 4h14v14H0z" fill="#7719aa"/><path d="M4.500 15V8l5 6.500V7.500" fill="none" stroke="#fff" stroke-width="1.8"/></svg></button>
      <button aria-label="File Explorer"><svg width="22" height="19" viewBox="0 0 22 19"><path d="M0 1h8l2 2h11v15H0z" fill="#e0a012"/><path d="M0 4h22v14H0z" fill="#fcd462"/><path d="M4 18v-8h14v8h-4v-4H8v4z" fill="#3a96d8"/></svg></button>
      <button aria-label="Chrome"><svg width="22" height="22" viewBox="0 0 22 22"><circle cx="11" cy="11" r="11" fill="#fbc116"/><path d="M11 11L1.500 5.500A11 11 0 0 1 20.500 5.500z" fill="#e33b2e"/><path d="M1.500 5.500A11 11 0 0 0 10.500 22L15.500 13.500 11 11 6.500 13.500z" fill="#2da94f"/><circle cx="11" cy="11" r="5.2" fill="#fff"/><circle cx="11" cy="11" r="4.2" fill="#4285f4"/></svg></button>
      <button class="on" aria-label="Excel"><svg width="23" height="22" viewBox="0 0 23 22"><path d="M12 2.500h10.500v17H12z" fill="#fff" stroke="#207245"/><path d="M14 5.500h3M18 5.500h3M14 8.500h3M18 8.500h3M14 11.500h3M18 11.500h3M14 14.500h3M18 14.500h3M14 17h3M18 17h3" stroke="#207245" stroke-width="1.5"/><path d="M0 2.500L13 0v22L0 19.500z" fill="#1d6f42"/><path d="M4 7l5 8M9 7l-5 8" stroke="#fff" stroke-width="1.8"/></svg></button>
      <div class="tray">
        <button aria-label="Hidden icons"><svg width="12" height="8" viewBox="0 0 12 8"><path d="M.7 7L6 1.500 11.300 7" fill="none" stroke="#fff" stroke-width="1.3"/></svg></button>
        <button aria-label="OneDrive"><svg width="16" height="10" viewBox="0 0 16 10"><path d="M3 9.500A3 3 0 0 1 3 4a5 5 0 0 1 9-1.500L8 6z" fill="#bbb"/><path d="M3 10c-2 0-3-1-2.500-2.500C2 6 5 7 6 5.500 8 2 13 2.500 13.500 5.500 16 5.500 16.500 9 14 10z" fill="#fff"/></svg></button>
        <button aria-label="Battery"><svg width="16" height="12" viewBox="0 0 16 12"><path d="M5.500 3.500h9v7h-9V8M3 .5v3M1 .5v2M4.500 3.500h-4v2h4zM2.500 6v5" fill="none" stroke="#fff"/><path d="M7 5h6v4H7zM15 5.500h1v3h-1z" fill="#fff"/></svg></button>
        <button aria-label="Network"><svg width="16" height="14" viewBox="0 0 16 14"><path d="M5 2.500h10.500v7H3V6M10 9.500V13M6 13.500h8M.5.5h4v4h-4zM2.500 5v5" fill="none" stroke="#fff"/></svg></button>
        <button aria-label="Volume"><svg width="16" height="13" viewBox="0 0 16 13"><path d="M.5 4.500h3l3.500-3.500v11L3.500 8.500h-3z" fill="none" stroke="#fff"/><path d="M9 4.500q1.500 2 0 4" fill="none" stroke="#fff"/><path d="M11 2.500q3 4 0 8M13 .5q4 6 0 12" fill="none" stroke="#888"/></svg></button>
        <button class="lang">FRA</button>
        <div class="clock">16:18<br>24/04/2021</div>
        <button class="bell" aria-label="Notifications"><svg width="16" height="16" viewBox="0 0 16 16"><path d="M.5.5h15v12h-5L8 15 5.500 12.500h-5z" fill="none" stroke="#fff" stroke-width="1.2"/></svg></button>
        <div class="desk"></div>
      </div>
    </footer>`;
  }

  render() {
    return html`${this.renderTop()}${this.renderRibbon()}${this.renderSheet()}${this.renderTaskbar()}<format-dialog role="dialog" aria-label="Edit Formatting Rule"></format-dialog>`;
  }
}
